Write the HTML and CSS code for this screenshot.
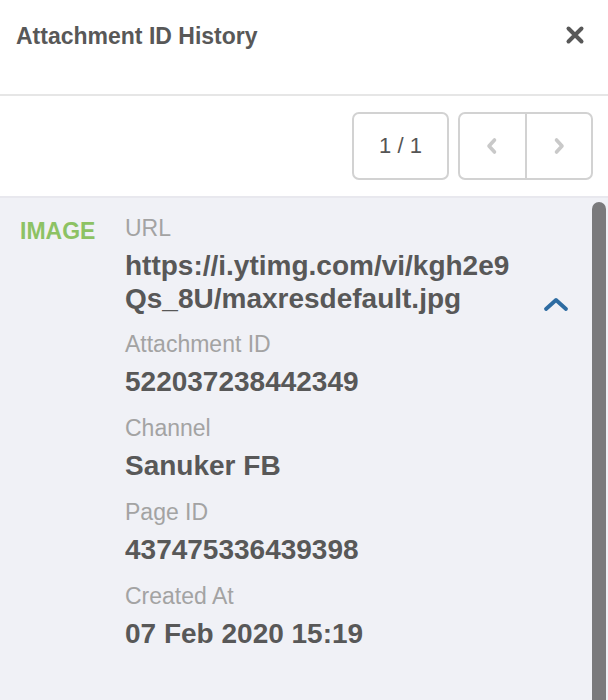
FILE: index.html
```html
<!DOCTYPE html>
<html>
<head>
<meta charset="utf-8">
<link rel="stylesheet" href="styles.css">
</head>
<body>
<div class="panel">
  <header class="header">
    <h1 class="title">Attachment ID History</h1>
    <button class="close" aria-label="Close">
      <svg width="20" height="20" viewBox="0 0 20 20"><path d="M3.5 3.5 L16.5 16.5 M16.5 3.5 L3.5 16.5" stroke="#585858" stroke-width="4" stroke-linecap="round" fill="none"/></svg>
    </button>
  </header>
  <div class="toolbar">
    <div class="counter">1 / 1</div>
    <div class="nav">
      <button class="nav-btn" aria-label="Previous">
        <svg width="14" height="18" viewBox="0 0 14 18"><path d="M9.5 3 L4 9 L9.5 15" stroke="#c9c9c9" stroke-width="3.6" stroke-linecap="round" stroke-linejoin="round" fill="none"/></svg>
      </button>
      <button class="nav-btn" aria-label="Next">
        <svg width="14" height="18" viewBox="0 0 14 18"><path d="M4.5 3 L10 9 L4.5 15" stroke="#c9c9c9" stroke-width="3.6" stroke-linecap="round" stroke-linejoin="round" fill="none"/></svg>
      </button>
    </div>
  </div>
  <div class="content">
    <div class="entry">
      <div class="type">IMAGE</div>
      <div class="fields">
        <div class="field">
          <div class="label">URL</div>
          <div class="value url">https://i.ytimg.com/vi/kgh2e9Qs_8U/maxresdefault.jpg</div>
        </div>
        <div class="field">
          <div class="label">Attachment ID</div>
          <div class="value">522037238442349</div>
        </div>
        <div class="field">
          <div class="label">Channel</div>
          <div class="value">Sanuker FB</div>
        </div>
        <div class="field">
          <div class="label">Page ID</div>
          <div class="value">437475336439398</div>
        </div>
        <div class="field">
          <div class="label">Created At</div>
          <div class="value">07 Feb 2020 15:19</div>
        </div>
      </div>
      <button class="toggle" aria-label="Collapse">
        <svg width="26" height="16" viewBox="0 0 26 16"><path d="M3 13 L13 4 L23 13" stroke="#2e6ca2" stroke-width="3.8" stroke-linecap="round" stroke-linejoin="round" fill="none"/></svg>
      </button>
    </div>
    <div class="scrollbar"></div>
  </div>
</div>
</body>
</html>
```

FILE: styles.css
```css
* { box-sizing: border-box; }
html, body { margin: 0; padding: 0; }
body {
  font-family: "Liberation Sans", Arial, Helvetica, sans-serif;
  background: #f0f1f6;
  color: #555555;
  width: 608px;
  height: 700px;
  overflow: hidden;
}
button {
  background: none;
  border: 0;
  padding: 0;
  margin: 0;
  cursor: pointer;
  display: flex;
  align-items: center;
  justify-content: center;
}
.panel {
  display: flex;
  flex-direction: column;
  height: 700px;
}
.header {
  background: #ffffff;
  height: 96px;
  padding: 22px 23px 0 16px;
  display: flex;
  justify-content: space-between;
  align-items: flex-start;
  border-bottom: 2px solid #e6e6e6;
}
.title {
  margin: 0;
  font-size: 23px;
  line-height: 28px;
  font-weight: bold;
  color: #585858;
}
.close {
  width: 20px;
  height: 20px;
  margin-top: 3px;
}
.toolbar {
  background: #ffffff;
  height: 102px;
  padding: 16px 15px 0 0;
  display: flex;
  justify-content: flex-end;
  align-items: flex-start;
  gap: 9px;
  border-bottom: 2px solid #e8e8ee;
}
.counter {
  width: 97px;
  height: 68px;
  border: 2px solid #d2d2d2;
  border-radius: 7px;
  display: flex;
  align-items: center;
  justify-content: center;
  font-size: 22px;
  color: #555555;
}
.nav {
  width: 135px;
  height: 68px;
  border: 2px solid #d2d2d2;
  border-radius: 7px;
  display: flex;
}
.nav-btn {
  flex: 1;
  height: 100%;
}
.nav-btn + .nav-btn {
  border-left: 2px solid #d2d2d2;
}
.content {
  position: relative;
  flex: 1;
  background: #f0f1f6;
  padding: 16px 0 0 20px;
}
.entry {
  display: grid;
  grid-template-columns: 105px 395px 1fr;
  align-items: start;
}
.type {
  margin-top: 3px;
  font-size: 23px;
  line-height: 28px;
  font-weight: bold;
  color: #8dc264;
}
.field {
  margin-bottom: 15px;
}
.label {
  font-size: 23px;
  line-height: 28px;
  color: #a3a3a3;
  margin-bottom: 7px;
}
.value {
  font-size: 28px;
  line-height: 34px;
  font-weight: bold;
  color: #585858;
}
.url {
  word-break: break-all;
  line-height: 33px;
}
.toggle {
  justify-self: end;
  width: 26px;
  height: 16px;
  margin-top: 82px;
  margin-right: 39px;
}
.scrollbar {
  position: absolute;
  top: 4px;
  right: 2px;
  width: 14px;
  height: 520px;
  background: #7a7a7c;
  border-radius: 7px 7px 0 0;
}
```
